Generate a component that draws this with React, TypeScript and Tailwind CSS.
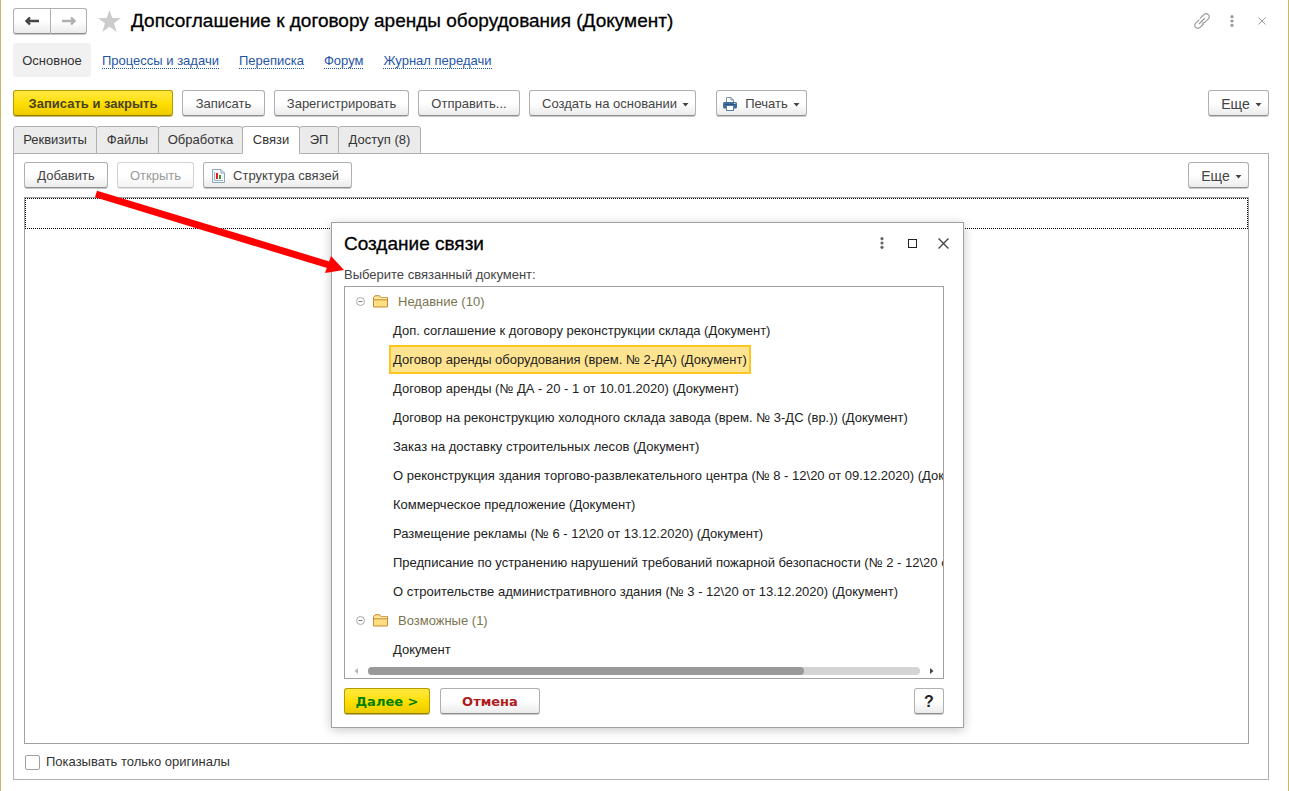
import React from "react";

const BTN =
  "flex h-[26px] shrink-0 items-center justify-center rounded-[3px] border border-[#b0b0b0] border-b-[#8f8f8f] bg-linear-to-b from-white from-50% to-[#ebebeb] pt-px text-[#444] shadow-[0_1px_0_#c8c8c8]";
const BTN_YELLOW =
  "flex h-[26px] shrink-0 items-center justify-center rounded-[3px] border border-[#b39b00] border-b-[#8f7c00] bg-linear-to-b from-[#ffe83b] via-[#ffe000] to-[#edcb00] pt-px font-bold shadow-[0_1px_0_#c9bd7a]";

const navLinks = ["Процессы и задачи", "Переписка", "Форум", "Журнал передачи"];

const tabs = [
  { label: "Реквизиты", width: "w-[84px]" },
  { label: "Файлы", width: "w-[63px]" },
  { label: "Обработка", width: "w-[85px]" },
  { label: "Связи", width: "w-[58px]", active: true },
  { label: "ЭП", width: "w-[40px]" },
  { label: "Доступ (8)", width: "w-[83px]" },
];

const groups = [
  {
    name: "Недавние (10)",
    items: [
      "Доп. соглашение к договору реконструкции склада (Документ)",
      "Договор аренды оборудования (врем. № 2-ДА) (Документ)",
      "Договор аренды (№ ДА - 20 - 1 от 10.01.2020) (Документ)",
      "Договор на реконструкцию холодного склада завода (врем. № 3-ДС (вр.)) (Документ)",
      "Заказ на доставку строительных лесов (Документ)",
      "О реконструкция здания торгово-развлекательного центра (№ 8 - 12\\20 от 09.12.2020) (Документ)",
      "Коммерческое предложение (Документ)",
      "Размещение рекламы (№ 6 - 12\\20 от 13.12.2020) (Документ)",
      "Предписание по устранению нарушений требований пожарной безопасности (№ 2 - 12\\20 от 13.12.2020) (Документ)",
      "О строительстве административного здания (№ 3 - 12\\20 от 13.12.2020) (Документ)",
    ],
  },
  { name: "Возможные (1)", items: ["Документ"] },
];

const SELECTED = "Договор аренды оборудования (врем. № 2-ДА) (Документ)";

const Caret = () => (
  <svg width="7" height="4" viewBox="0 0 7 4" className="ml-[5px] mt-0.5">
    <path d="M0.5 0h6L3.5 3.6z" fill="#444" />
  </svg>
);

const Arrow = ({ color, flip }: { color: string; flip?: boolean }) => (
  <svg width="14" height="10" viewBox="0 0 14 10" className={flip ? "rotate-180" : ""}>
    <path d="M5 1.500L1.500 5L5 8.500M2 5H14" fill="none" stroke={color} strokeWidth="2.400" />
  </svg>
);

const Dots = ({ color }: { color: string }) => (
  <svg width="4" height="12" viewBox="0 0 4 12" fill={color}>
    <circle cx="2" cy="1.700" r="1.600" />
    <circle cx="2" cy="6" r="1.600" />
    <circle cx="2" cy="10.300" r="1.600" />
  </svg>
);

const Cross = ({ size, color }: { size: number; color: string }) => (
  <svg width={size} height={size} viewBox="0 0 10 10" stroke={color} strokeWidth="1.200">
    <path d="M0.500 0.500l9 9M9.500 0.500l-9 9" />
  </svg>
);

const LinkIcon = () => (
  <svg width="16" height="16" viewBox="0 0 16 16" fill="none" stroke="#9a9a9a" strokeWidth="1.200" strokeLinecap="round">
    <path d="M6.500 5L10 1.600a2.900 2.900 0 0 1 4.300 0a2.900 2.900 0 0 1 0 4.300L11 9.200a2.900 2.900 0 0 1-2.500 0.800" />
    <path d="M9.500 11L6 14.400a2.900 2.900 0 0 1-4.300 0a2.900 2.900 0 0 1 0-4.300L5 6.800" />
    <path d="M5.500 10.500l5-5" />
  </svg>
);

const Printer = () => (
  <svg width="14" height="14" viewBox="0 0 14 14">
    <path d="M3.500 5V0.500h4.500l2.500 2.500v2" fill="#fff" stroke="#7d93ab" />
    <path d="M8 0.500v2.500h2.500" fill="none" stroke="#7d93ab" />
    <rect y="5" width="14" height="6.500" rx="1.500" fill="#3f6d9b" />
    <path d="M2 7.500h10" stroke="#274f78" />
    <rect x="3.500" y="8.500" width="7" height="5" fill="#fff" stroke="#5580a8" />
    <rect x="11" y="6" width="1.500" height="1" fill="#d4e3f2" />
  </svg>
);

const ReportIcon = () => (
  <svg width="13" height="14" viewBox="0 0 13 14">
    <path d="M0.500 0.500h8.500l3.500 3.500v9.500h-12z" fill="#f3f8fc" stroke="#8fa5b8" />
    <path d="M9 0.500v3.500h3.500" fill="none" stroke="#8fa5b8" />
    <path d="M2.500 3v8.500H11" fill="none" stroke="#9fb4c6" />
    <rect x="4" y="4" width="2" height="6" fill="#f01818" />
    <rect x="7" y="6" width="2" height="4" fill="#2f9a2f" />
  </svg>
);

const Folder = () => (
  <svg width="15" height="13" viewBox="0 0 15 13">
    <path d="M0.500 12V2.500L2 0.700h4.500L8 2.500h6.500V12z" fill="#ffdf80" stroke="#c8893a" />
    <path d="M0.500 4.800h14" stroke="#c8893a" />
    <path d="M1 3.300h13" stroke="#fff0b8" />
  </svg>
);

const Collapse = () => (
  <svg width="9" height="9" viewBox="0 0 9 9" fill="none">
    <circle cx="4.500" cy="4.500" r="4" stroke="#a8a8a8" />
    <path d="M2.500 4.500h4" stroke="#777" />
  </svg>
);

const MoreButton = () => (
  <button className={`${BTN} w-[61px] pl-1.5 text-sm`}>
    Еще
    <Caret />
  </button>
);

const LinkDialog = () => (
  <div
    role="dialog"
    aria-labelledby="dialog-title"
    className="absolute left-[330px] top-[222px] w-[633px] border border-[#a0a0a0] bg-white pb-[13px] pl-3 pr-[19px] shadow-[0_2px_10px_rgba(0,0,0,0.22)]"
  >
    <div className="-mr-[15px] flex h-10 items-center">
      <h2 id="dialog-title" className="flex-1 pt-0.5 text-[19px] font-normal text-black [-webkit-text-stroke:0.3px_black]">
        Создание связи
      </h2>
      <button aria-label="Меню" className="flex w-[31px] justify-center">
        <Dots color="#666" />
      </button>
      <button aria-label="Развернуть" className="flex w-[31px] justify-center">
        <span className="size-[9px] border border-[#222]" />
      </button>
      <button aria-label="Закрыть" className="flex w-[31px] justify-center">
        <Cross size={11} color="#444" />
      </button>
    </div>
    <p className="flex h-[23px] items-center text-[#444]">Выберите связанный документ:</p>
    <div className="overflow-hidden border border-[#a0a0a0]">
      <ul>
        {groups.map((group) => (
          <li key={group.name}>
            <div className="flex h-[29px] items-center pl-[11px] text-[#7b7550]">
              <Collapse />
              <span className="ml-2 mr-2.5">
                <Folder />
              </span>
              {group.name}
            </div>
            <ul>
              {group.items.map((item) => (
                <li key={item} className="flex h-[29px] pl-11">
                  <button
                    className={`h-[29px] whitespace-nowrap border-2 px-0.5 text-[#222] ${
                      item === SELECTED ? "border-[#fcc520] bg-[#fee491]" : "border-transparent"
                    }`}
                  >
                    {item}
                  </button>
                </li>
              ))}
            </ul>
          </li>
        ))}
      </ul>
      <div className="flex h-3.5 items-center px-[9px]">
        <svg width="5" height="6" viewBox="0 0 5 6">
          <path d="M4 0v6L0.500 3z" fill="#b8b8b8" />
        </svg>
        <div className="mx-[9px] h-2 flex-1 rounded-full bg-[#d4d4d4]">
          <div className="h-2 w-[79%] rounded-full bg-[#999]" />
        </div>
        <svg width="5" height="6" viewBox="0 0 5 6">
          <path d="M1 0v6L4.500 3z" fill="#444" />
        </svg>
      </div>
    </div>
    <div className="mt-[9px] flex gap-2.5">
      <button className={`${BTN_YELLOW} w-[86px] font-["DejaVu_Sans",sans-serif] text-[#008000]`}>Далее &gt;</button>
      <button className={`${BTN} w-[100px] font-["DejaVu_Sans",sans-serif] font-bold`}>
        <span className="text-[#b01c1c]">Отмена</span>
      </button>
      <button className={`${BTN} ml-auto w-[30px] text-base font-bold`}>
        <span className="text-[#222]">?</span>
      </button>
    </div>
  </div>
);

const App = () => {
  return (
    <div className="relative flex min-h-screen flex-col border-x border-[#c9b768] bg-white pb-[11px] pl-3 pr-[19px] pt-2 font-['Liberation_Sans',Arial,sans-serif] text-[13px] text-[#333]">
      <header className="flex h-[25px] items-center">
        <div className="flex">
          <button aria-label="Назад" className={`${BTN} w-[38px] rounded-r-none`}>
            <Arrow color="#444" />
          </button>
          <button aria-label="Вперед" className={`${BTN} w-9 rounded-l-none border-l-0`}>
            <Arrow color="#b0b0b0" flip />
          </button>
        </div>
        <svg width="23" height="22" viewBox="0 0 23 22" className="ml-[11px] mr-2.5">
          <path d="M11.500 0l2.900 8.100H23l-6.900 5.200L18.700 22l-7.200-5.200L4.300 22l2.600-8.700L0 8.100h8.600z" fill="#cdcdcd" />
        </svg>
        <h1 className="flex-1 pt-0.5 text-[19px] font-normal text-black [-webkit-text-stroke:0.3px_black]">
          Допсоглашение к договору аренды оборудования (Документ)
        </h1>
        <div className="-mr-2 flex items-center">
          <button aria-label="Ссылка" className="flex w-[30px] justify-center">
            <LinkIcon />
          </button>
          <button aria-label="Меню" className="flex w-[30px] justify-center">
            <Dots color="#9a9a9a" />
          </button>
          <button aria-label="Закрыть" className="flex w-[30px] justify-center">
            <Cross size={8} color="#9a9a9a" />
          </button>
        </div>
      </header>

      <nav className="mt-2.5 flex h-[34px] items-center">
        <span className="mr-[11px] flex h-[34px] w-[78px] items-center justify-center rounded-[3px] bg-[#f1f1f1] pt-0.5">
          Основное
        </span>
        <div className="flex gap-5 pt-0.5">
          {navLinks.map((link) => (
            <a key={link} href="#" className="border-b border-dotted border-[#1f55a5] leading-[14px] text-[#1f55a5]">
              {link}
            </a>
          ))}
        </div>
      </nav>

      <div className="mt-[13px] flex gap-[9px]">
        <button className={`${BTN_YELLOW} w-[160px] text-[#4a4220]`}>Записать и закрыть</button>
        <button className={`${BTN} w-[83px]`}>Записать</button>
        <button className={`${BTN} w-[135px]`}>Зарегистрировать</button>
        <button className={`${BTN} w-[102px]`}>Отправить...</button>
        <button className={`${BTN} w-[167px] pl-1.5`}>
          Создать на основании
          <Caret />
        </button>
        <button className={`${BTN} ml-[11px] w-[91px]`}>
          <span className="mr-2">
            <Printer />
          </span>
          Печать
          <Caret />
        </button>
        <div className="ml-auto">
          <MoreButton />
        </div>
      </div>

      <div role="tablist" className="relative z-10 mt-2.5 flex">
        {tabs.map((tab) => (
          <button
            key={tab.label}
            role="tab"
            aria-selected={!!tab.active}
            className={`-mr-px h-7 rounded-t-[3px] border border-[#b0b0b0] ${tab.width} ${
              tab.active ? "border-b-white bg-white" : "bg-[#ebebeb]"
            }`}
          >
            {tab.label}
          </button>
        ))}
      </div>

      <main className="-mt-px flex flex-1 flex-col border border-[#b0b0b0] pb-[7px] pl-2.5 pr-[19px] pt-2">
        <div className="flex gap-[9px]">
          <button className={`${BTN} w-[84px]`}>Добавить</button>
          <button disabled className={`${BTN} w-[77px] opacity-55`}>
            Открыть
          </button>
          <button className={`${BTN} w-[149px] pr-1`}>
            <span className="mr-2">
              <ReportIcon />
            </span>
            Структура связей
          </button>
          <div className="ml-auto">
            <MoreButton />
          </div>
        </div>
        <div className="mt-[9px] flex-1 border border-[#a0a0a0]">
          <div className="h-[31px] border border-dotted border-black" />
        </div>
        <label className="mt-2 flex h-5 items-center gap-1.5 pl-px">
          <input type="checkbox" className="size-[15px] appearance-none rounded-[2px] border border-[#a0a0a0] bg-white" />
          Показывать только оригиналы
        </label>
      </main>

      <LinkDialog />

      <svg width="252" height="86" viewBox="0 0 252 86" className="pointer-events-none absolute left-[93px] top-[189px]">
        <path d="M2 5L235 76" stroke="#f00" strokeWidth="7" />
        <path d="M237 67L250 81L231 84z" fill="#f00" />
      </svg>
    </div>
  );
};

export default App;
